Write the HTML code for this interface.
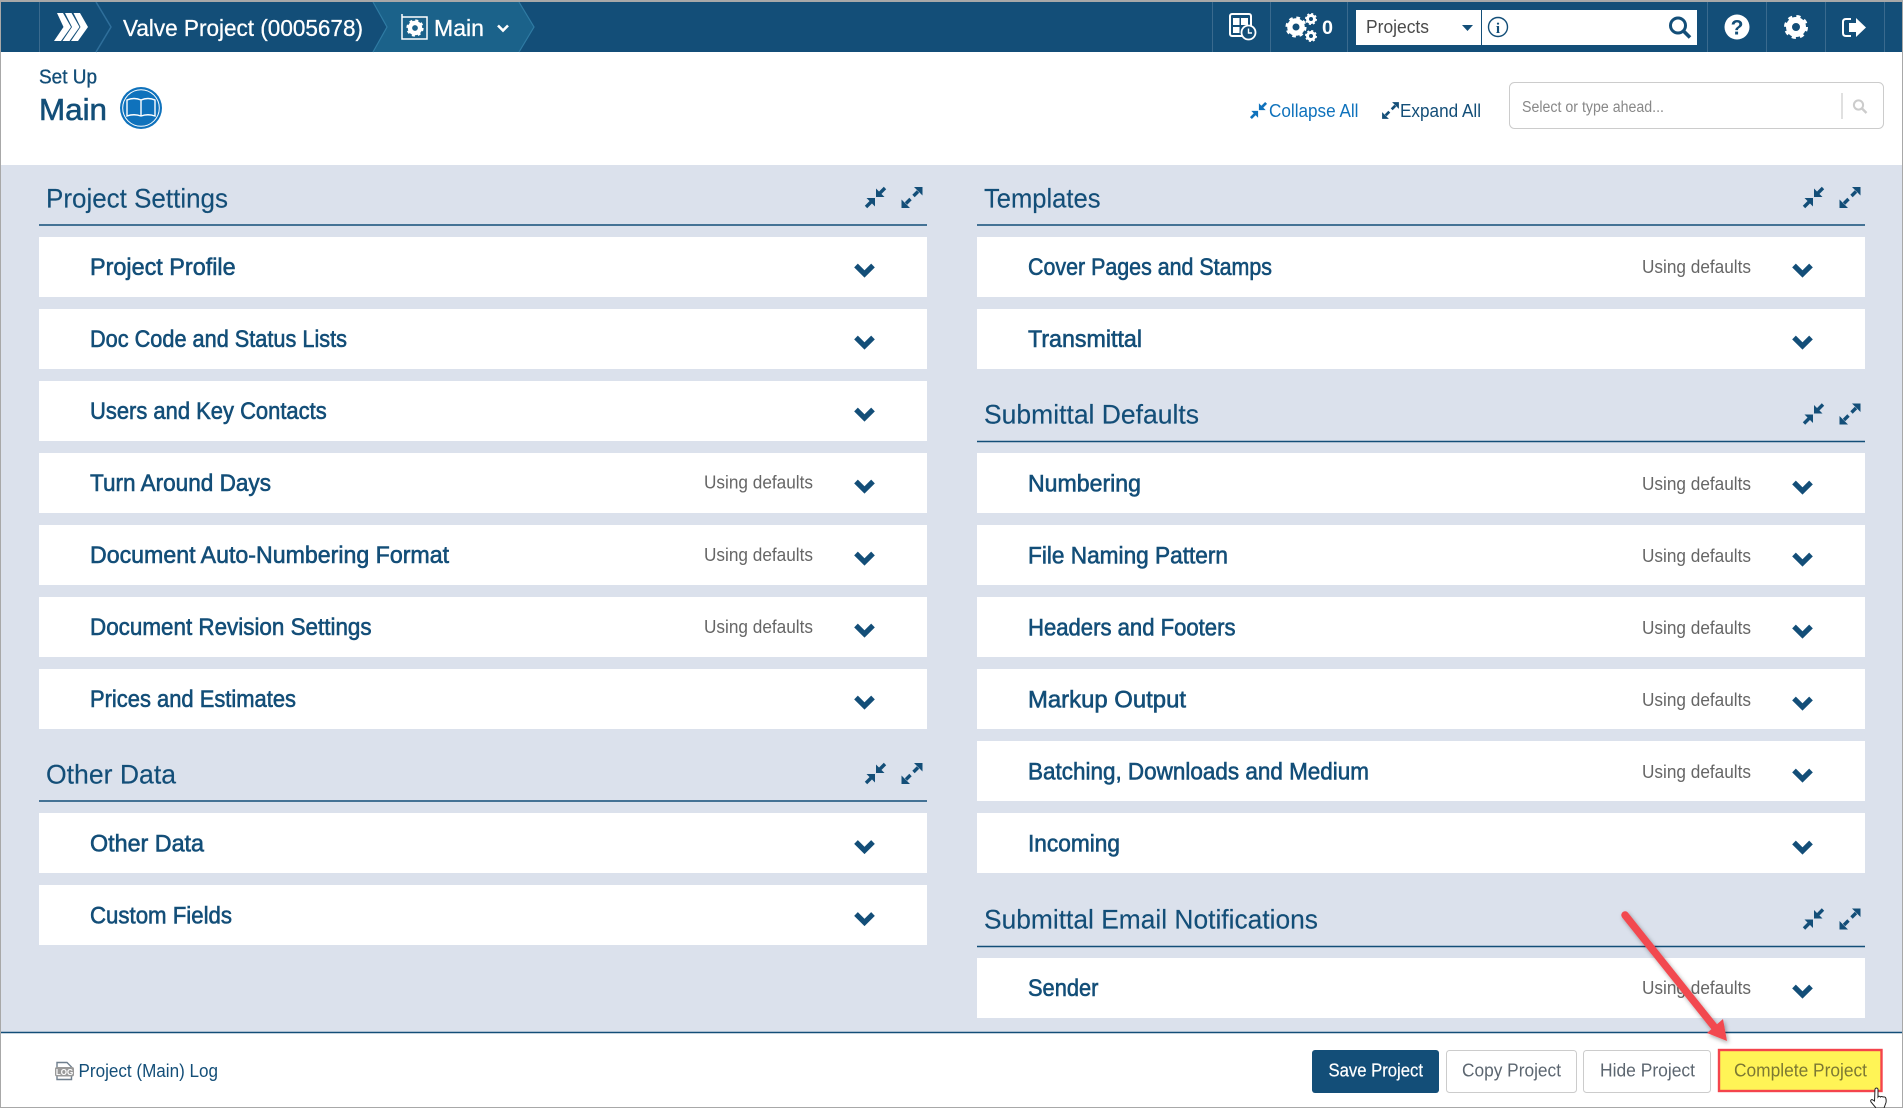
<!DOCTYPE html>
<html>
<head>
<meta charset="utf-8">
<title>Set Up Main</title>
<style>
html,body{margin:0;padding:0;background:#fff;width:1903px;height:1108px;overflow:hidden}
svg{display:block;position:absolute;left:0;top:0}
text{font-family:"Liberation Sans",Arial,sans-serif}
.r{font-size:24px;fill:#134e78;stroke:#134e78;stroke-width:.6px}
.s{font-size:27px;fill:#134e78;stroke:#134e78;stroke-width:.15px}
.u{font-size:18px;fill:#666}
.b{font-size:18px;fill:#5c6670}
</style>
</head>
<body>
<svg width="1903" height="1108" viewBox="0 0 1903 1108" xmlns="http://www.w3.org/2000/svg">
<defs>
<g id="chev"><path d="M-8.5,-3.5 L0,5 L8.5,-3.5" fill="none" stroke="#134e78" stroke-width="5.2"/></g>
<g id="col"><polygon points="-0.5,0.5 -0.5,9 -9,0.5"/><polygon points="0.5,-0.5 0.5,-9 9,-0.5"/><path d="M-4.5,4.5 L-9.5,9.5 M4.5,-4.5 L9.5,-9.5" stroke-width="3.4" stroke="currentColor"/></g>
<g id="exp"><polygon points="10.5,-10.5 10.5,-2 2,-10.5"/><polygon points="-10.5,10.5 -10.5,2 -2,10.5"/><path d="M6,-6 L1.5,-1.5 M-6,6 L-1.5,1.5" stroke-width="3.4" stroke="currentColor"/></g>
<g id="gear"><circle r="7" fill="none" stroke="#fff" stroke-width="6"/><circle r="10" fill="none" stroke="#fff" stroke-width="4" stroke-dasharray="3.93 3.93"/></g>
<filter id="sh" x="-20%" y="-20%" width="140%" height="140%"><feDropShadow dx="1.5" dy="2" stdDeviation="2" flood-color="#000" flood-opacity=".35"/></filter>
</defs>

<!-- page frame -->
<rect width="1903" height="1108" fill="#fff"/>
<rect x="0" y="165" width="1903" height="867" fill="#dbe1ec"/>

<!-- header -->
<rect x="0" y="2" width="1903" height="50" fill="#134e78"/>
<polygon points="373,2 519,2 534,27 519,52 373,52 387,27" fill="#1b628a"/>
<path d="M39.5,2V52" stroke="#3a6a8e" stroke-width="1"/>
<path d="M96,2 L111,27 L96,52" fill="none" stroke="#2f6f9b" stroke-width="1.5"/>
<path d="M373,2 L387,27 L373,52 M519,2 L534,27 L519,52" fill="none" stroke="#2f7ba3" stroke-width="1.2"/>
<g fill="#fff">
<polygon points="57,13 63,13 71,27 61,41 54,41 63.500,27"/>
<polygon points="65,13 71.500,13 79.500,27 69.500,41 62.500,41 72,27"/>
<polygon points="73.500,13 80,13 88,27 78,41 71,41 80.500,27"/>
</g>
<text x="123" y="36" font-size="23" fill="#fff" stroke="#fff" stroke-width=".3" textLength="240" lengthAdjust="spacingAndGlyphs">Valve Project (0005678)</text>
<path d="M402,14V39H427V17H402" fill="none" stroke="#fff" stroke-width="1.5"/>
<use href="#gear" transform="translate(415,28) scale(.72)"/>
<text x="434" y="36" font-size="23" fill="#fff" stroke="#fff" stroke-width=".3" textLength="50" lengthAdjust="spacingAndGlyphs">Main</text>
<path d="M498,25.5 L503,30.5 L508,25.5" fill="none" stroke="#fff" stroke-width="2.6"/>

<g stroke="#3a6a8e" stroke-width="1">
<path d="M1212.5,2V52M1270.5,2V52M1347.5,2V52M1707.5,2V52M1766.5,2V52M1825.5,2V52M1884.5,2V52"/>
</g>
<rect x="1230" y="14" width="21" height="22" rx="2" fill="none" stroke="#fff" stroke-width="2"/>
<g fill="#fff"><rect x="1233" y="18" width="6.5" height="7"/><rect x="1241" y="18" width="7" height="7"/><rect x="1233" y="27" width="6.5" height="6"/></g>
<circle cx="1248.5" cy="32.5" r="7" fill="#134e78" stroke="#fff" stroke-width="1.8"/>
<path d="M1248.5,28.5V33H1252" fill="none" stroke="#fff" stroke-width="1.4"/>
<use href="#gear" transform="translate(1296,27) scale(.88)"/>
<use href="#gear" transform="translate(1311,19) scale(.5)"/>
<use href="#gear" transform="translate(1311,36) scale(.5)"/>
<text x="1322" y="34" font-size="19" font-weight="700" fill="#fff" textLength="11" lengthAdjust="spacingAndGlyphs">0</text>
<rect x="1356" y="10" width="341" height="35" fill="#fff"/>
<path d="M1481.5,10V45" stroke="#134e78" stroke-width="1"/>
<text x="1366" y="33" font-size="18" fill="#4a4a4a" textLength="63" lengthAdjust="spacingAndGlyphs">Projects</text>
<polygon points="1462,25 1473,25 1467.5,31" fill="#134e78"/>
<circle cx="1498" cy="27" r="9.5" fill="none" stroke="#134e78" stroke-width="1.4"/>
<text x="1498" y="33" font-size="15" font-weight="700" text-anchor="middle" fill="#134e78" style="font-family:'Liberation Serif',serif">i</text>
<circle cx="1678" cy="25.5" r="7.5" fill="none" stroke="#134e78" stroke-width="3"/>
<path d="M1683.5,31 L1690,37.5" stroke="#134e78" stroke-width="3.6"/>
<circle cx="1737" cy="27" r="12.5" fill="#fff"/>
<text x="1737" y="34.5" font-size="21" font-weight="700" text-anchor="middle" fill="#134e78">?</text>
<use href="#gear" transform="translate(1796,27)"/>
<path d="M1851,19H1846q-3,0 -3,3V33q0,3 3,3H1851" fill="none" stroke="#fff" stroke-width="2"/>
<path d="M1849,23H1856V18L1866,27.5L1856,37V32H1849Z" fill="#fff"/>

<!-- page title -->
<text x="39" y="83.500" font-size="20" fill="#134e78" stroke="#134e78" stroke-width=".35" textLength="58" lengthAdjust="spacingAndGlyphs">Set Up</text>
<text x="39" y="120" font-size="31" fill="#134e78" stroke="#134e78" stroke-width=".6" textLength="68" lengthAdjust="spacingAndGlyphs">Main</text>
<circle cx="141" cy="108" r="21" fill="#0f72bc"/>
<circle cx="141" cy="108" r="18.3" fill="none" stroke="#fff" stroke-width="1"/>
<path d="M127,100 q7,-3 14,0 q7,-3 14,0 V116 q-7,-2.5 -14,0 q-7,-2.5 -14,0 Z M141,100 V116" fill="none" stroke="#fff" stroke-width="1.4"/>

<!-- collapse / expand all -->
<g fill="#0f72bc" color="#0f72bc"><use href="#col" transform="translate(1258.5,110.5) scale(.8)"/></g>
<text x="1269" y="117" font-size="18" fill="#0f72bc" textLength="89.500" lengthAdjust="spacingAndGlyphs">Collapse All</text>
<g fill="#134e78" color="#134e78"><use href="#exp" transform="translate(1390.500,110.5) scale(.8)"/></g>
<text x="1400" y="117" font-size="18" fill="#134e78" textLength="81" lengthAdjust="spacingAndGlyphs">Expand All</text>
<rect x="1509.5" y="82.5" width="374" height="46" rx="5" fill="#fff" stroke="#ccc"/>
<text x="1522" y="112" font-size="15.5" fill="#888" textLength="142" lengthAdjust="spacingAndGlyphs">Select or type ahead...</text>
<path d="M1842,93V119" stroke="#ccc" stroke-width="1.2"/>
<circle cx="1858.500" cy="105" r="4.6" fill="none" stroke="#ccc" stroke-width="2"/>
<path d="M1862,108.5 L1866.500,113" stroke="#ccc" stroke-width="2.4"/>

<!-- section heads -->
<g stroke="#134e78" stroke-width="1.4">
<path d="M39,225H927M39,801H927M977,225H1865M977,441.5H1865M977,946.5H1865"/>
</g>
<text class="s" x="46" y="207.500" textLength="182" lengthAdjust="spacingAndGlyphs">Project Settings</text>
<text class="s" x="46" y="783.500" textLength="130" lengthAdjust="spacingAndGlyphs">Other Data</text>
<text class="s" x="984" y="207.500" textLength="116.5" lengthAdjust="spacingAndGlyphs">Templates</text>
<text class="s" x="984" y="423.500" textLength="215" lengthAdjust="spacingAndGlyphs">Submittal Defaults</text>
<text class="s" x="984" y="928.500" textLength="334" lengthAdjust="spacingAndGlyphs">Submittal Email Notifications</text>
<g fill="#134e78" color="#134e78">
<use href="#col" transform="translate(875.5,197.500)"/><use href="#exp" transform="translate(912,197.5)"/>
<use href="#col" transform="translate(875.5,773.500)"/><use href="#exp" transform="translate(912,773.5)"/>
<use href="#col" transform="translate(1813.5,197.500)"/><use href="#exp" transform="translate(1850,197.5)"/>
<use href="#col" transform="translate(1813.5,414)"/><use href="#exp" transform="translate(1850,414)"/>
<use href="#col" transform="translate(1813.5,919)"/><use href="#exp" transform="translate(1850,919)"/>
</g>

<!-- left rows -->
<g fill="#fff">
<rect x="39" y="237" width="888" height="60"/><rect x="39" y="309" width="888" height="60"/><rect x="39" y="381" width="888" height="60"/><rect x="39" y="453" width="888" height="60"/><rect x="39" y="525" width="888" height="60"/><rect x="39" y="597" width="888" height="60"/><rect x="39" y="669" width="888" height="60"/><rect x="39" y="813" width="888" height="60"/><rect x="39" y="885" width="888" height="60"/>
<rect x="977" y="237" width="888" height="60"/><rect x="977" y="309" width="888" height="60"/><rect x="977" y="453" width="888" height="60"/><rect x="977" y="525" width="888" height="60"/><rect x="977" y="597" width="888" height="60"/><rect x="977" y="669" width="888" height="60"/><rect x="977" y="741" width="888" height="60"/><rect x="977" y="813" width="888" height="60"/><rect x="977" y="958" width="888" height="60"/>
</g>
<text class="r" x="90" y="275" textLength="145.6" lengthAdjust="spacingAndGlyphs">Project Profile</text>
<text class="r" x="90" y="347" textLength="257" lengthAdjust="spacingAndGlyphs">Doc Code and Status Lists</text>
<text class="r" x="90" y="419" textLength="236.7" lengthAdjust="spacingAndGlyphs">Users and Key Contacts</text>
<text class="r" x="90" y="491" textLength="181" lengthAdjust="spacingAndGlyphs">Turn Around Days</text>
<text class="r" x="90" y="563" textLength="359" lengthAdjust="spacingAndGlyphs">Document Auto-Numbering Format</text>
<text class="r" x="90" y="635" textLength="281.6" lengthAdjust="spacingAndGlyphs">Document Revision Settings</text>
<text class="r" x="90" y="707" textLength="206" lengthAdjust="spacingAndGlyphs">Prices and Estimates</text>
<text class="r" x="90" y="851.5" textLength="114" lengthAdjust="spacingAndGlyphs">Other Data</text>
<text class="r" x="90" y="923.5" textLength="142" lengthAdjust="spacingAndGlyphs">Custom Fields</text>

<text class="r" x="1028" y="275" textLength="244" lengthAdjust="spacingAndGlyphs">Cover Pages and Stamps</text>
<text class="r" x="1028" y="347" textLength="114" lengthAdjust="spacingAndGlyphs">Transmittal</text>
<text class="r" x="1028" y="491.5" textLength="113" lengthAdjust="spacingAndGlyphs">Numbering</text>
<text class="r" x="1028" y="563.5" textLength="200" lengthAdjust="spacingAndGlyphs">File Naming Pattern</text>
<text class="r" x="1028" y="635.5" textLength="207.5" lengthAdjust="spacingAndGlyphs">Headers and Footers</text>
<text class="r" x="1028" y="707.5" textLength="158" lengthAdjust="spacingAndGlyphs">Markup Output</text>
<text class="r" x="1028" y="779.5" textLength="341" lengthAdjust="spacingAndGlyphs">Batching, Downloads and Medium</text>
<text class="r" x="1028" y="851.5" textLength="92" lengthAdjust="spacingAndGlyphs">Incoming</text>
<text class="r" x="1028" y="996" textLength="70.4" lengthAdjust="spacingAndGlyphs">Sender</text>

<text class="u" x="704" y="488.500" textLength="109" lengthAdjust="spacingAndGlyphs">Using defaults</text>
<text class="u" x="704" y="561" textLength="109" lengthAdjust="spacingAndGlyphs">Using defaults</text>
<text class="u" x="704" y="633" textLength="109" lengthAdjust="spacingAndGlyphs">Using defaults</text>
<text class="u" x="1642" y="273" textLength="109" lengthAdjust="spacingAndGlyphs">Using defaults</text>
<text class="u" x="1642" y="490" textLength="109" lengthAdjust="spacingAndGlyphs">Using defaults</text>
<text class="u" x="1642" y="562" textLength="109" lengthAdjust="spacingAndGlyphs">Using defaults</text>
<text class="u" x="1642" y="634" textLength="109" lengthAdjust="spacingAndGlyphs">Using defaults</text>
<text class="u" x="1642" y="706" textLength="109" lengthAdjust="spacingAndGlyphs">Using defaults</text>
<text class="u" x="1642" y="778" textLength="109" lengthAdjust="spacingAndGlyphs">Using defaults</text>
<text class="u" x="1642" y="994" textLength="109" lengthAdjust="spacingAndGlyphs">Using defaults</text>

<use href="#chev" x="864.5" y="269"/><use href="#chev" x="864.5" y="341"/><use href="#chev" x="864.5" y="413"/><use href="#chev" x="864.5" y="485"/><use href="#chev" x="864.5" y="557"/><use href="#chev" x="864.5" y="629"/><use href="#chev" x="864.5" y="701"/><use href="#chev" x="864.5" y="845.500"/><use href="#chev" x="864.5" y="917.500"/>
<use href="#chev" x="1802.5" y="269"/><use href="#chev" x="1802.5" y="341"/><use href="#chev" x="1802.5" y="486"/><use href="#chev" x="1802.5" y="558"/><use href="#chev" x="1802.5" y="630"/><use href="#chev" x="1802.5" y="702"/><use href="#chev" x="1802.5" y="774"/><use href="#chev" x="1802.5" y="846"/><use href="#chev" x="1802.5" y="990"/>

<!-- footer -->
<rect x="0" y="1032.5" width="1903" height="75" fill="#fff"/>
<path d="M0,1032.5H1903" stroke="#134e78" stroke-width="1.4"/>
<path d="M57,1068V1062.5H67L71.5,1067V1079.5H57V1075" fill="none" stroke="#6f7f8e" stroke-width="1.4"/>
<rect x="55" y="1067" width="19" height="9.5" rx="2" fill="#999"/>
<text x="64.5" y="1075" font-size="8" font-weight="700" fill="#fff" text-anchor="middle">LOG</text>
<text x="78.500" y="1077" font-size="18" fill="#134e78" textLength="139.500" lengthAdjust="spacingAndGlyphs">Project (Main) Log</text>

<rect x="1312" y="1050" width="127" height="43" rx="3" fill="#134e78"/>
<text x="1328.500" y="1076.5" font-size="18" fill="#fff" stroke="#fff" stroke-width=".2" textLength="94.500" lengthAdjust="spacingAndGlyphs">Save Project</text>
<rect x="1446.5" y="1050.5" width="130" height="42" rx="3" fill="#fff" stroke="#ccc"/>
<text class="b" x="1462" y="1076.5" textLength="99" lengthAdjust="spacingAndGlyphs">Copy Project</text>
<rect x="1583.5" y="1050.5" width="127" height="42" rx="3" fill="#fff" stroke="#ccc"/>
<text class="b" x="1600" y="1076.5" textLength="95" lengthAdjust="spacingAndGlyphs">Hide Project</text>
<rect x="1719" y="1050" width="162.500" height="41" fill="#fff456" stroke="#f4444c" stroke-width="2.4"/>
<text x="1734" y="1076.5" font-size="18" fill="#7c7833" textLength="133" lengthAdjust="spacingAndGlyphs">Complete Project</text>

<!-- frame lines -->
<rect x="0" y="0" width="1903" height="2" fill="#a8a8a8"/>
<rect x="0" y="0" width="1" height="1108" fill="#a8a8a8"/>
<rect x="1902" y="0" width="1" height="1108" fill="#a8a8a8"/>
<rect x="0" y="1107" width="1903" height="1" fill="#a8a8a8"/>

<!-- arrow -->
<g filter="url(#sh)">
<path d="M1625,915 L1716,1029" stroke="#f2484f" stroke-width="7.5" stroke-linecap="round"/>
<polygon points="1727,1041 1707,1033 1723,1019" fill="#f2484f"/>
</g>

<!-- cursor -->
<path d="M1875,1089q1.500,-2 3,0v8q1,-1.500 2.500,0q1,-1 2.500,0q1.500,-.5 2.500,.5q1,2 .5,5l-2,5.500h-8l-5,-6q-1,-2 1,-2.500l2.500,1.500Z" fill="#fff" stroke="#222" stroke-width="1"/>
</svg>
</body>
</html>
